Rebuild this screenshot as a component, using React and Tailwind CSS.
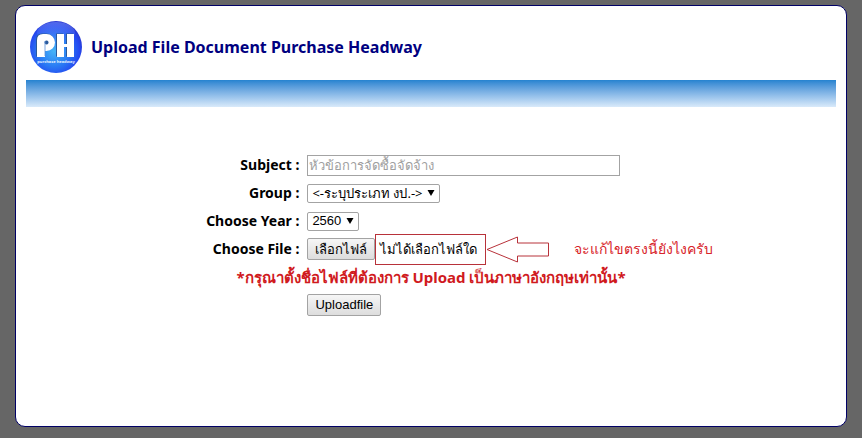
import { useRef } from 'react'

const GROUPS = ['<-ระบุประเภท งป.->']
const YEARS = ['2560', '2559', '2558']

const labelClass = 'pr-0.5 text-right text-sm font-bold text-black'
const selectClass =
  'h-[19px] w-full appearance-none rounded-xs border border-[#a3a3a3] bg-white pl-1 pr-0 text-[13px] leading-4 text-black'
const buttonClass =
  'h-[22px] rounded-xs border border-[#a3a3a3] bg-linear-to-b from-[#f6f6f6] to-[#dddddd] px-[7px] text-[13px] leading-4 whitespace-nowrap text-black'

function Logo() {
  return (
    <svg viewBox="0 0 54 54" className="size-[54px] shrink-0" aria-label="PH">
      <defs>
        <radialGradient id="ball" cx="46%" cy="58%" r="58%">
          <stop offset="0" stopColor="#45b4f8" />
          <stop offset="0.5" stopColor="#2a7cf4" />
          <stop offset="0.85" stopColor="#2448f0" />
          <stop offset="1" stopColor="#2a38d0" />
        </radialGradient>
        <linearGradient id="shine" x1="0" y1="0" x2="0" y2="1">
          <stop offset="0" stopColor="#6f86f4" stopOpacity="0.6" />
          <stop offset="1" stopColor="#5a80f8" stopOpacity="0" />
        </linearGradient>
      </defs>
      <circle cx="27" cy="27" r="26" fill="url(#ball)" />
      <ellipse cx="27" cy="13" rx="19" ry="11" fill="url(#shine)" />
      <g fill="#2a5a9c" transform="translate(-1 -0.6)">
        <path d="M8 20q0-6 6-6h4a8 8 0 0 1 0 17h-2v6H8z" />
        <path d="M28 14h7v23h-7zM38 14h7v23h-7z" />
      </g>
      <g fill="#fff">
        <path
          fillRule="evenodd"
          d="M8 20q0-6 6-6h3.500a8 8 0 0 1 0 17H16v6H8zM17.500 20.500a2 2 0 1 0 .1 0z"
        />
        <path d="M28 14h7v23h-7zM38 14h7v23h-7zM35 24h3v3h-3z" />
      </g>
      <path d="M16 21v15" stroke="#5a90d8" strokeWidth="0.8" />
      <text x="27" y="43" textAnchor="middle" fontSize="4" fontWeight="700" fill="#e4f0ff">
        purchase headway
      </text>
    </svg>
  )
}

function Select({ id, options, className }) {
  return (
    <div className={`relative flex ${className}`}>
      <select id={id} className={selectClass}>
        {options.map(o => (
          <option key={o}>{o}</option>
        ))}
      </select>
      <svg viewBox="0 0 8 6" className="pointer-events-none absolute top-[6px] right-[5px] h-1.5 w-2">
        <path d="M0.500 0h7L4 6z" fill="#000" />
      </svg>
    </div>
  )
}

export default function App() {
  const fileRef = useRef(null)

  return (
    <div className="flex min-h-screen flex-col bg-[#666666] px-[15px] pt-[5px] pb-[11px] font-['Noto_Sans','Liberation_Sans',sans-serif]">
      <main className="flex-1 rounded-[10px] border border-[#000066] bg-white px-2.5">
        <header className="flex h-[74px] items-center gap-2 px-[3px] pt-2">
          <Logo />
          <h1 className="text-base font-bold text-[#000080]">Upload File Document Purchase Headway</h1>
        </header>
        <div className="h-[27px] bg-linear-to-b from-[#2483d0] to-[#d9eafa]" />

        <form className="mt-[46px] grid auto-rows-[24px] grid-cols-[34%_1fr] items-center gap-x-1.5 gap-y-1">
          <label htmlFor="subject" className={labelClass}>Subject :</label>
          <input
            id="subject"
            type="text"
            placeholder="หัวข้อการจัดซื้อจัดจ้าง"
            className="h-[21px] w-[313px] border border-[#a3a3a3] px-px text-[13px] leading-4 placeholder:text-[#a0a0a0]"
          />

          <label htmlFor="group" className={labelClass}>Group :</label>
          <Select id="group" options={GROUPS} className="w-[133px]" />

          <label htmlFor="year" className={labelClass}>Choose Year :</label>
          <Select id="year" options={YEARS} className="w-[52px] font-['Liberation_Sans',sans-serif]" />

          <label htmlFor="file" className={labelClass}>Choose File :</label>
          <div className="relative flex items-center">
            <input id="file" ref={fileRef} type="file" className="sr-only" />
            <button type="button" onClick={() => fileRef.current.click()} className={`${buttonClass} w-[68px]`}>
              เลือกไฟล์
            </button>
            <span className="-my-1 flex h-[31px] w-[111px] items-center border border-[#b8323a] px-1 text-[13px] leading-4 whitespace-nowrap text-black">
              ไม่ได้เลือกไฟล์ใด
            </span>
            <svg viewBox="0 0 64 27" className="h-[27px] w-16 shrink-0">
              <path d="M1 13.500L31.500 1v6h31v13h-31v6z" fill="none" stroke="#b8323a" />
            </svg>
            <span className="ml-6 text-sm whitespace-nowrap text-[#d8232a]">จะแก้ไขตรงนี้ยังไงครับ</span>
          </div>

          <p className="col-span-2 text-center text-[15px] font-bold text-[#d01a1e]">
            *กรุณาตั้งชื่อไฟล์ที่ต้องการ Upload เป็นภาษาอังกฤษเท่านั้น*
          </p>

          <button
            type="submit"
            className={`${buttonClass} col-start-2 w-[74px] font-['Liberation_Sans',sans-serif]`}
          >
            Uploadfile
          </button>
        </form>
      </main>
    </div>
  )
}
